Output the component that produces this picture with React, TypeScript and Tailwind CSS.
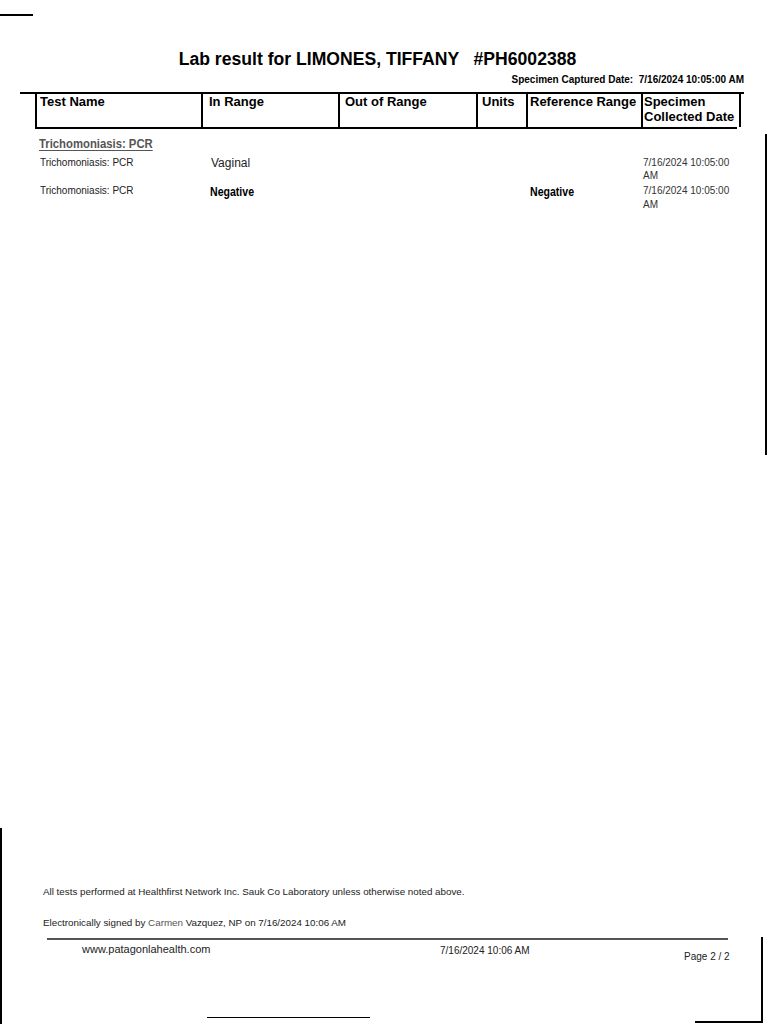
import React from "react";

const cols = "grid grid-cols-[166px_137px_138px_50px_113px_102px]";

export default function App() {
  return (
    <div
      className="relative w-[768px] h-[1024px] bg-white overflow-hidden flex flex-col text-black"
      style={{ fontFamily: '"Liberation Sans", Arial, sans-serif' }}
    >
      {/* page-edge marks */}
      <div className="absolute left-0 top-[828px] w-[2px] h-[196px] bg-black" />
      <div className="absolute left-[765px] top-[134px] w-[2px] h-[321px] bg-black" />
      <div className="absolute left-[761px] top-[937px] w-[2px] h-[86px] bg-black" />
      <div className="absolute left-[695px] top-[1021px] w-[68px] h-[2px] bg-black" />

      <div className="mt-[14px] w-[33px] h-[2px] bg-black" />

      <div className="mt-[32px] h-[22px] pr-[13px] text-center text-[17.6px] leading-[22px] font-bold whitespace-pre">
        {"Lab result for LIMONES, TIFFANY   #PH6002388"}
      </div>

      <div className="mt-[4px] h-[12px] pr-[24px] text-right text-[10px] leading-[12px] font-bold whitespace-pre">
        {"Specimen Captured Date:  7/16/2024 10:05:00 AM"}
      </div>

      {/* table */}
      <div className="mt-[6px] ml-[20px] w-[724px] h-[2px] bg-black" />
      <div className="ml-[35px] w-[706px]">
        <div className={`${cols} h-[33px] border-l-2 border-r-2 border-black text-[13px] leading-[15px] font-bold`}>
          <div className="pl-[3px] border-r-2 border-black">Test Name</div>
          <div className="pl-[6px] border-r-2 border-black">In Range</div>
          <div className="pl-[5px] border-r-2 border-black">Out of Range</div>
          <div className="pl-[4px] border-r-2 border-black">Units</div>
          <div className="pl-[2px] whitespace-nowrap">Reference Range</div>
          <div className="pl-[1px] border-l-2 border-black">Specimen<br />Collected Date</div>
        </div>
        <div className="w-[702px] h-[2px] bg-black" />

        <div className="mt-[7px] ml-[4px] h-[15px] text-[13px] leading-[15px] font-bold text-[#555]">
          <span className="inline-block origin-left scale-x-[0.87] underline underline-offset-2 whitespace-nowrap">
            Trichomoniasis: PCR
          </span>
        </div>

        <div className={`${cols} mt-[5px] h-[27px] text-[10px] leading-[13px] text-[#222]`}>
          <div className="pl-[5px]">Trichomoniasis: PCR</div>
          <div className="pl-[10px] text-[12px] leading-[14px]">Vaginal</div>
          <div />
          <div />
          <div />
          <div className="pl-[4px] text-[#333]">7/16/2024 10:05:00<br />AM</div>
        </div>

        <div className={`${cols} mt-[1px] text-[10px] leading-[14px] text-[#222]`}>
          <div className="pl-[5px]">Trichomoniasis: PCR</div>
          <div className="pl-[9px] pt-[1px] text-[12px] leading-[14px] font-bold text-black">
            <span className="inline-block origin-left scale-x-[0.88]">Negative</span>
          </div>
          <div />
          <div />
          <div className="pl-[4px] pt-[1px] text-[12px] leading-[14px] font-bold text-black">
            <span className="inline-block origin-left scale-x-[0.88]">Negative</span>
          </div>
          <div className="pl-[4px] text-[#333]">7/16/2024 10:05:00<br />AM</div>
        </div>
      </div>

      <div className="flex-1" />

      {/* footer */}
      <div className="h-[141px] flex flex-col text-[9.8px] leading-[14px] text-[#222]">
        <div className="pl-[43px] mt-[2px] h-[14px]">
          All tests performed at Healthfirst Network Inc. Sauk Co Laboratory unless otherwise noted above.
        </div>
        <div className="pl-[43px] mt-[17px] h-[14px]">
          Electronically signed by <span className="text-[#555]">Carmen</span> Vazquez, NP on 7/16/2024 10:06 AM
        </div>
        <div className="mt-[8px] ml-[47px] w-[681px] h-[2px] bg-[#555]" />
        <div className="flex h-[22px]">
          <div className="pl-[82px] pt-[2px] w-[440px] text-[11px] leading-[14px]">www.patagonlahealth.com</div>
          <div className="w-[244px] pt-[4px] text-[10px] leading-[14px]">7/16/2024 10:06 AM</div>
          <div className="pt-[10px] text-[10px] leading-[14px]">Page 2 / 2</div>
        </div>
        <div className="flex-1" />
        <div className="ml-[207px] w-[163px] h-[1px] bg-black mb-[6px]" />
      </div>
    </div>
  );
}
